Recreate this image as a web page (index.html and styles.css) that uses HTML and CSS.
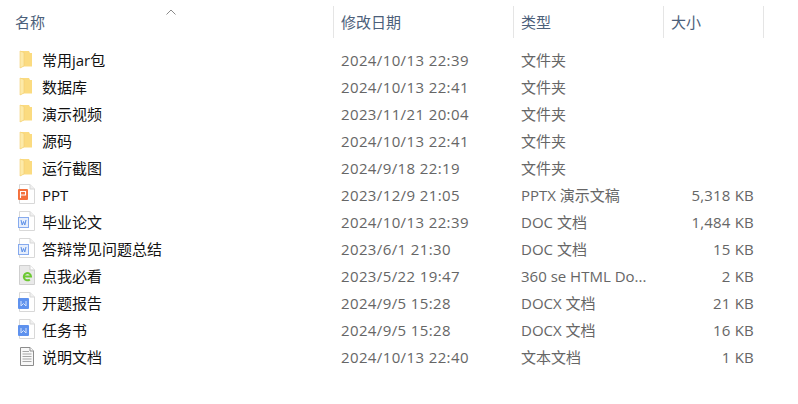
FILE: index.html
```html
<!DOCTYPE html>
<html>
<head>
    <meta name="viewport" content="width=device-width, initial-scale=1.0">
    <title>文件列表</title>
    <link rel="stylesheet" href="styles.css">
</head>
<body>
    <svg class="defs" width="0" height="0">
        <symbol id="folder" viewBox="0 0 18 20">
            <path d="M3.5 2 H12 L13 4 H15 V17.5 H6 L3.5 19 Z" fill="#fbdb80"/>
            <path d="M3 2 L7 3.5 V17 L3 19 Z" fill="#fdeaa8" stroke="#f3cf6e" stroke-width="0.6"/>
        </symbol>
        <symbol id="page" viewBox="0 0 18 20">
            <path d="M2.5 0.5 H13 L17.5 5 V19.5 H2.5 Z" fill="#fff" stroke="#d8d8d8"/>
            <path d="M13 0.5 V5 H17.5" fill="#f0f0f0" stroke="#d8d8d8"/>
        </symbol>
        <symbol id="doc" viewBox="0 0 18 20">
            <use href="#page" width="18" height="20"/>
            <rect x="1.5" y="6.5" width="10" height="10" fill="#e6eefc" stroke="#86aaee"/>
            <path d="M4 9 L5.2 14 L6.5 10.5 L7.8 14 L9 9" fill="none" stroke="#5b8fe8"/>
        </symbol>
        <symbol id="docx" viewBox="0 0 18 20">
            <use href="#page" width="18" height="20"/>
            <rect x="1" y="6" width="11" height="11" rx="1" fill="#5f92ee"/>
            <path d="M4 9 V14 L6.5 11.5 L9 14 V9" fill="none" stroke="#d5e3fc"/>
        </symbol>
    </svg>

    <div class="list">
        <div class="head">
            <div class="col name-col">名称<span class="sort"><svg width="10" height="6" viewBox="0 0 10 6"><path d="M0.5 5.5 L5 1 L9.5 5.5" fill="none" stroke="#8a8a8a"/></svg></span></div>
            <div class="col date-col">修改日期</div>
            <div class="col type-col">类型</div>
            <div class="col size-col">大小</div>
        </div>

        <div class="rows">
            <div class="row">
                <div class="name"><svg class="ico"><use href="#folder"/></svg>常用jar包</div>
                <div class="date">2024/10/13 22:39</div><div class="type">文件夹</div><div class="size"></div>
            </div>
            <div class="row">
                <div class="name"><svg class="ico"><use href="#folder"/></svg>数据库</div>
                <div class="date">2024/10/13 22:41</div><div class="type">文件夹</div><div class="size"></div>
            </div>
            <div class="row">
                <div class="name"><svg class="ico"><use href="#folder"/></svg>演示视频</div>
                <div class="date">2023/11/21 20:04</div><div class="type">文件夹</div><div class="size"></div>
            </div>
            <div class="row">
                <div class="name"><svg class="ico"><use href="#folder"/></svg>源码</div>
                <div class="date">2024/10/13 22:41</div><div class="type">文件夹</div><div class="size"></div>
            </div>
            <div class="row">
                <div class="name"><svg class="ico"><use href="#folder"/></svg>运行截图</div>
                <div class="date">2024/9/18 22:19</div><div class="type">文件夹</div><div class="size"></div>
            </div>
            <div class="row">
                <div class="name">
                    <svg class="ico" viewBox="0 0 18 20"><use href="#page" width="18" height="20"/><rect x="1" y="5" width="10" height="11" rx="1" fill="#f4703c"/><path d="M3.5 14 V7.5 H8.5 V11 H3.5" fill="none" stroke="#fff" stroke-width="1.1"/></svg>PPT
                </div>
                <div class="date">2023/12/9 21:05</div><div class="type">PPTX 演示文稿</div><div class="size">5,318 KB</div>
            </div>
            <div class="row">
                <div class="name"><svg class="ico"><use href="#doc"/></svg>毕业论文</div>
                <div class="date">2024/10/13 22:39</div><div class="type">DOC 文档</div><div class="size">1,484 KB</div>
            </div>
            <div class="row">
                <div class="name"><svg class="ico"><use href="#doc"/></svg>答辩常见问题总结</div>
                <div class="date">2023/6/1 21:30</div><div class="type">DOC 文档</div><div class="size">15 KB</div>
            </div>
            <div class="row">
                <div class="name">
                    <svg class="ico" viewBox="0 0 18 20"><path d="M2.5 0.5 H13 L17.5 5 V19.5 H2.5 Z" fill="#e9e9e9" stroke="#cfcfcf"/><path d="M13 0.5 V5 H17.5" fill="#fff" stroke="#cfcfcf"/><path d="M7 11.5 H14 A3.6 3.6 0 1 0 12.8 14.4" fill="none" stroke="#6cc832" stroke-width="2"/></svg>点我必看
                </div>
                <div class="date">2023/5/22 19:47</div><div class="type">360 se HTML Do...</div><div class="size">2 KB</div>
            </div>
            <div class="row">
                <div class="name"><svg class="ico"><use href="#docx"/></svg>开题报告</div>
                <div class="date">2024/9/5 15:28</div><div class="type">DOCX 文档</div><div class="size">21 KB</div>
            </div>
            <div class="row">
                <div class="name"><svg class="ico"><use href="#docx"/></svg>任务书</div>
                <div class="date">2024/9/5 15:28</div><div class="type">DOCX 文档</div><div class="size">16 KB</div>
            </div>
            <div class="row">
                <div class="name">
                    <svg class="ico" viewBox="0 0 18 20"><path d="M3.5 1.5 H13 L16.5 5 V19.5 H3.5 Z" fill="#f8f8f8" stroke="#8c8c8c"/><path d="M13 1.5 V5 H16.5" fill="#fff" stroke="#8c8c8c"/><path d="M5.5 5.5 H12 M5.5 8 H14.5 M5.5 10.5 H14.5 M5.5 13 H14.5 M5.5 15.5 H14.5" stroke="#a6a6a6"/></svg>说明文档
                </div>
                <div class="date">2024/10/13 22:40</div><div class="type">文本文档</div><div class="size">1 KB</div>
            </div>
        </div>
    </div>
</body>
</html>
```

FILE: styles.css
```css
html, body { margin: 0; padding: 0; background: #fff; }
body { font-family: "Open Sans", "Noto Sans CJK SC", sans-serif; font-size: 15px; overflow: hidden; }
.defs { display: block; height: 0; }
.list { width: 798px; padding-top: 6px; }

.head { display: flex; height: 32px; color: #4c607a; }
.col { box-sizing: border-box; line-height: 32px; border-right: 1px solid #e5e5e5; padding-left: 7px; position: relative; }
.name-col { width: 334px; padding-left: 15px; }
.date-col { width: 180px; }
.type-col { width: 150px; }
.size-col { width: 100px; }
.sort { position: absolute; left: 166px; top: 0; line-height: 6px; }

.rows { padding-top: 9px; }
.row { display: flex; height: 27px; line-height: 26px; color: #666; }
.name { width: 334px; display: flex; align-items: flex-start; color: #111; box-sizing: border-box; padding-left: 17px; }
.ico { width: 18px; height: 20px; margin: 2px 7px 0 0; flex: none; }
.date { width: 180px; padding-left: 7px; box-sizing: border-box; letter-spacing: 0.38px; }
.type { width: 150px; padding-left: 7px; box-sizing: border-box; }
.size { width: 90px; text-align: right; letter-spacing: 0.2px; }
```
